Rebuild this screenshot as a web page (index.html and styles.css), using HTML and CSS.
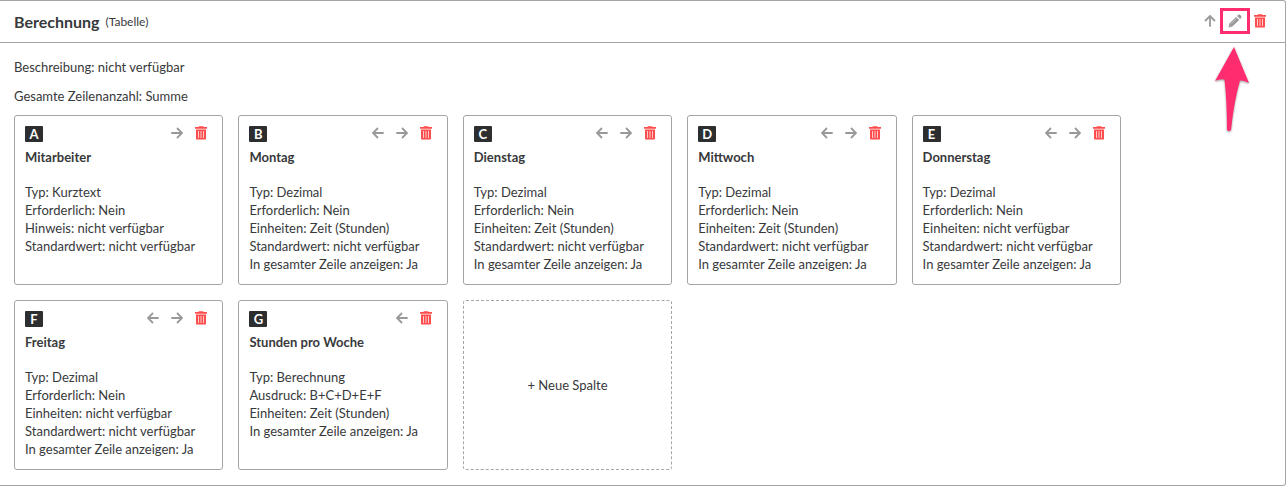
FILE: index.html
```html
<!DOCTYPE html>
<html lang="de">
<head>
  <meta charset="UTF-8">
  <meta name="viewport" content="width=device-width, initial-scale=1.0">
  <title>Berechnung (Tabelle)</title>
  <link rel="stylesheet" href="styles.css">
</head>
<body>
  <!-- icon set, used below by id -->
  <svg class="sprite" aria-hidden="true">
    <symbol id="arrow-right" viewBox="0 0 12 12">
      <path d="M0.3 6H11M6 1L11 6L6 11" fill="none" stroke="currentColor" stroke-width="1.8"/>
    </symbol>
    <symbol id="arrow-left" viewBox="0 0 12 12">
      <path d="M11.7 6H1M6 1L1 6L6 11" fill="none" stroke="currentColor" stroke-width="1.8"/>
    </symbol>
    <symbol id="arrow-up" viewBox="0 0 12 12">
      <path d="M6 11.7V1M1 6L6 1L11 6" fill="none" stroke="currentColor" stroke-width="1.8"/>
    </symbol>
    <symbol id="trash" viewBox="0 0 12 14">
      <path d="M3.6 0.3H8.4V1H12V2.7H0V1H3.6Z" fill="currentColor"/>
      <path d="M1 3.5H11V12.8Q11 13.5 10.3 13.5H1.7Q1 13.5 1 12.8Z" fill="currentColor"/>
      <path d="M3.5 5V12M6 5V12M8.5 5V12" fill="none" stroke="#fff" stroke-width="1" opacity="0.7"/>
    </symbol>
    <symbol id="pencil" viewBox="0 0 14 14">
      <path d="M0.5 13.5L1.4 9.6L8.1 2.9L11.1 5.9L4.4 12.6ZM9.1 1.9L10.3 0.8Q11.1 0.1 11.9 0.8L13.2 2.1Q13.9 2.9 13.2 3.7L12.1 4.9Z" fill="currentColor"/>
      <path d="M3.2 9.7L8.2 4.7M1.5 11.3L2.7 12.5" fill="none" stroke="#fff" stroke-width="0.6" opacity="0.7"/>
    </symbol>
  </svg>

  <section class="panel">
    <header class="panel-header">
      <h1>Berechnung</h1>
      <span class="kind">(Tabelle)</span>
      <div class="actions">
        <button type="button" aria-label="Nach oben"><svg class="icon"><use href="#arrow-up"/></svg></button>
        <button type="button" class="edit" aria-label="Bearbeiten">
          <svg class="icon-pencil"><use href="#pencil"/></svg>
          <svg class="pointer" viewBox="0 0 40 90" aria-hidden="true">
            <path d="M20 2L35 38Q30 35 26 35.5Q20 56 17 85Q15 87 13 85Q13 56 10.5 34.5Q6 33.5 1 36Z"/>
          </svg>
        </button>
        <button type="button" class="delete" aria-label="Löschen"><svg class="icon-trash"><use href="#trash"/></svg></button>
      </div>
    </header>

    <div class="panel-body">
      <div class="summary">
        <p>Beschreibung: nicht verfügbar</p>
        <p>Gesamte Zeilenanzahl: Summe</p>
      </div>
      <div class="columns">
        <button type="button" class="add-column">+ Neue Spalte</button>
      </div>
    </div>
  </section>

  <script src="script.js"></script>
</body>
</html>
```
FILE: styles.css
```css
* {
  box-sizing: border-box;
}

body {
  margin: 0;
  background: #fff;
  color: #38393b;
  font-family: Lato, "Liberation Sans", sans-serif;
  font-size: 13px;
  line-height: 18px;
}

h1,
h2,
p,
ul {
  margin: 0;
}

button {
  padding: 0;
  border: none;
  background: none;
  color: #999;
  font: inherit;
  cursor: pointer;
}

svg {
  display: block;
}

.sprite {
  position: absolute;
  width: 0;
  height: 0;
}

.panel {
  border: 1px solid #a5a5a5;
  border-left: none;
  border-radius: 0 3px 3px 0;
}

.panel-header {
  display: flex;
  align-items: center;
  height: 42px;
  padding: 0 19px 0 14px;
  border-bottom: 1px solid #a5a5a5;
}

.panel-header h1 {
  font-size: 16px;
}

.kind {
  margin-left: 6px;
  font-size: 12px;
}

.actions {
  display: flex;
  align-items: center;
  gap: 12px;
  margin-left: auto;
}

.icon {
  width: 12px;
  height: 12px;
}

.icon-trash {
  width: 12px;
  height: 14px;
}

.icon-pencil {
  width: 14px;
  height: 14px;
}

.delete {
  color: #ff4d4d;
}

.panel-header .actions {
  gap: 4px;
  padding-bottom: 2px;
}

/* highlighted edit button with the arrow below it */
.edit {
  position: relative;
  display: flex;
  align-items: center;
  justify-content: center;
  width: 30px;
  height: 26px;
  border: 3px solid #ff2d6f;
}

.pointer {
  position: absolute;
  top: 34px;
  left: -9px;
  width: 40px;
  height: 90px;
  fill: #ff2d6f;
  filter: drop-shadow(0 1px 1px rgba(0, 0, 0, 0.4));
  pointer-events: none;
}

.panel-body {
  padding: 15px 14px;
}

.summary {
  display: grid;
  gap: 11px;
  margin-bottom: 10px;
}

.columns {
  display: grid;
  grid-template-columns: repeat(auto-fill, minmax(209px, 1fr));
  grid-auto-rows: minmax(170px, auto);
  gap: 15px;
  max-width: 1107px;
}

.column {
  padding: 10px;
  border: 1px solid #a5a5a5;
  border-radius: 3px;
}

.column-top {
  display: flex;
  align-items: flex-start;
  height: 16px;
  padding-right: 5px;
}

.letter {
  width: 18px;
  border-radius: 1px;
  background: #2d2e30;
  color: #fff;
  font-weight: bold;
  line-height: 16px;
  text-align: center;
}

.column h2 {
  margin-top: 6px;
  font-size: 13px;
}

.column ul {
  margin-top: 17px;
  padding: 0;
  list-style: none;
}

.add-column {
  border: 1px dashed #a5a5a5;
  border-radius: 3px;
  color: #38393b;
}
```
FILE: script.js
```js
const columns = [
  { name: 'Mitarbeiter', fields: ['Typ: Kurztext', 'Erforderlich: Nein', 'Hinweis: nicht verfügbar', 'Standardwert: nicht verfügbar'] },
  { name: 'Montag', fields: ['Typ: Dezimal', 'Erforderlich: Nein', 'Einheiten: Zeit (Stunden)', 'Standardwert: nicht verfügbar', 'In gesamter Zeile anzeigen: Ja'] },
  { name: 'Dienstag', fields: ['Typ: Dezimal', 'Erforderlich: Nein', 'Einheiten: Zeit (Stunden)', 'Standardwert: nicht verfügbar', 'In gesamter Zeile anzeigen: Ja'] },
  { name: 'Mittwoch', fields: ['Typ: Dezimal', 'Erforderlich: Nein', 'Einheiten: Zeit (Stunden)', 'Standardwert: nicht verfügbar', 'In gesamter Zeile anzeigen: Ja'] },
  { name: 'Donnerstag', fields: ['Typ: Dezimal', 'Erforderlich: Nein', 'Einheiten: nicht verfügbar', 'Standardwert: nicht verfügbar', 'In gesamter Zeile anzeigen: Ja'] },
  { name: 'Freitag', fields: ['Typ: Dezimal', 'Erforderlich: Nein', 'Einheiten: nicht verfügbar', 'Standardwert: nicht verfügbar', 'In gesamter Zeile anzeigen: Ja'] },
  { name: 'Stunden pro Woche', fields: ['Typ: Berechnung', 'Ausdruck: B+C+D+E+F', 'Einheiten: Zeit (Stunden)', 'In gesamter Zeile anzeigen: Ja'] }
];

function button(icon, label, cls = '') {
  const iconClass = icon === 'trash' ? 'icon-trash' : 'icon';
  return `<button type="button" class="${cls}" aria-label="${label}"><svg class="${iconClass}"><use href="#${icon}"/></svg></button>`;
}

const addButton = document.querySelector('.add-column');

columns.forEach((column, i) => {
  // first column can't move left, last one can't move right
  const left = i > 0 ? button('arrow-left', 'Nach links') : '';
  const right = i < columns.length - 1 ? button('arrow-right', 'Nach rechts') : '';

  addButton.insertAdjacentHTML('beforebegin', `
    <article class="column">
      <div class="column-top">
        <span class="letter">${String.fromCharCode(65 + i)}</span>
        <div class="actions">${left}${right}${button('trash', 'Löschen', 'delete')}</div>
      </div>
      <h2>${column.name}</h2>
      <ul>${column.fields.map(f => `<li>${f}</li>`).join('')}</ul>
    </article>`);
});
```
